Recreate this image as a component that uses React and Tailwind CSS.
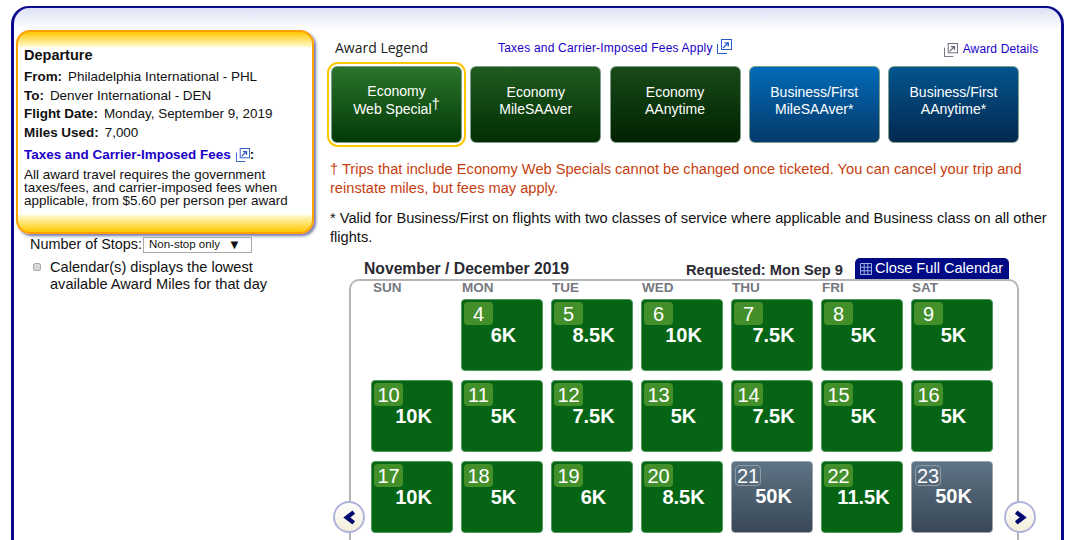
const legend = [
  { top: 'Economy', bottom: 'Web Special', dagger: true, bg: 'bg-gradient-to-b from-[#2b752b] to-[#033a07]', selected: true },
  { top: 'Economy', bottom: 'MileSAAver', bg: 'bg-gradient-to-b from-[#1f5c1f] to-[#032e05]' },
  { top: 'Economy', bottom: 'AAnytime', bg: 'bg-gradient-to-b from-[#194a1a] to-[#022202]' },
  { top: 'Business/First', bottom: 'MileSAAver*', bg: 'bg-gradient-to-b from-[#016bb8] to-[#043a6c]' },
  { top: 'Business/First', bottom: 'AAnytime*', bg: 'bg-gradient-to-b from-[#02558f] to-[#03294f]' },
];

const dayNames = ['SUN', 'MON', 'TUE', 'WED', 'THU', 'FRI', 'SAT'];

const days = [
  null,
  { d: 4, m: '6K' }, { d: 5, m: '8.5K' }, { d: 6, m: '10K' }, { d: 7, m: '7.5K' }, { d: 8, m: '5K' }, { d: 9, m: '5K' },
  { d: 10, m: '10K' }, { d: 11, m: '5K' }, { d: 12, m: '7.5K' }, { d: 13, m: '5K' }, { d: 14, m: '7.5K' }, { d: 15, m: '5K' }, { d: 16, m: '5K' },
  { d: 17, m: '10K' }, { d: 18, m: '5K' }, { d: 19, m: '6K' }, { d: 20, m: '8.5K' }, { d: 21, m: '50K', sold: true }, { d: 22, m: '11.5K' }, { d: 23, m: '50K', sold: true },
];

function PopupIcon({ className }) {
  return (
    <svg viewBox="0 0 15 15" className={className} fill="none" stroke="currentColor" strokeWidth="1">
      <rect x="4.5" y="0.5" width="10" height="10" />
      <path d="M0.5 5v9.5H10" />
      <path d="M6 9l5-5M7.5 3.8h3.8v3.8" strokeWidth="1.3" />
    </svg>
  );
}

function LegendButton({ item }) {
  return (
    <div className={`w-[131px] h-[77px] pb-[8px] rounded-[6px] border border-[#7f9f8a] flex flex-col items-center justify-center text-white text-[14px] leading-[17px] ${item.bg}`}>
      <span>{item.top}</span>
      <span>
        {item.bottom}
        {item.dagger && <span className="text-[15px] relative top-[-5px]">†</span>}
      </span>
    </div>
  );
}

function DayCell({ day }) {
  if (!day) return <div className="h-[72px]" />;
  return (
    <div className={`h-[72px] rounded-[4px] border p-[2px] text-white ${day.sold ? 'bg-gradient-to-b from-[#5e7484] to-[#394859] border-[#9aa5ad]' : 'bg-[#056515] border-[#4f9a5c]'}`}>
      <div className={`rounded-[4px] flex items-center justify-center text-[20px] leading-none ${day.sold ? 'border border-[#8d9ba6] w-[26px] h-[21px] mt-[1px] ml-[1px]' : 'bg-[#43902a] w-[29px] h-[23px]'}`}>
        {day.d}
      </div>
      <div className={`pl-[3px] text-center text-[20px] font-bold leading-[22px] ${day.sold ? 'mt-[-1px]' : 'mt-[-1px]'}`}>{day.m}</div>
    </div>
  );
}

function ArrowButton({ dir, className }) {
  return (
    <div className={`absolute w-[32px] h-[32px] rounded-full border-2 border-[#aeb4dc] bg-gradient-to-b from-white to-[#f3efd8] flex items-center justify-center ${className}`}>
      <svg viewBox="0 0 14 14" className="w-[15px] h-[15px]" fill="none" stroke="#000a6e" strokeWidth="4">
        <path d={dir === 'left' ? 'M11 2L4.5 7l6.5 5' : 'M3 2l6.5 5L3 12'} />
      </svg>
    </div>
  );
}

export default function App() {
  return (
    <div className="w-[1072px] h-[540px] overflow-hidden bg-white pt-[6px] pl-[11px] font-['Liberation_Sans',Arial,sans-serif] text-[#111]">
      {/* Outer panel */}
      <div className="w-[1053px] h-[600px] border-[3px] border-b-0 border-[#0a0a8c] border-t-2 rounded-t-[18px] bg-gradient-to-b from-[#dde1f6] to-white to-[22px] flex pt-[22px] pl-[2px]">
        {/* Left column */}
        <div className="w-[298px] shrink-0">
          <div className="h-[204px] rounded-[14px] border-2 border-[#ffa000] shadow-[2px_2px_3px_#6d75a8] bg-[linear-gradient(to_bottom,#ffc800_0,#fff7c4_14px,#fff_16px,#fff_calc(100%-18px),#fff7c4_calc(100%-16px),#ffc800_100%)] pl-[6px] pt-[14px] text-[13.45px]">
            <div className="font-bold text-[14.5px] leading-[18px]">Departure</div>
            <div className="mt-[4px] leading-[18.5px]">
              <div><b className="mr-[6px]">From:</b>Philadelphia International - PHL</div>
              <div><b className="mr-[6px]">To:</b>Denver International - DEN</div>
              <div><b className="mr-[6px]">Flight Date:</b>Monday, September 9, 2019</div>
              <div><b className="mr-[6px]">Miles Used:</b>7,000</div>
            </div>
            <div className="mt-[4px] font-bold leading-[18px] flex items-center">
              <span className="text-[#1a00c8]">Taxes and Carrier-Imposed Fees</span>
              <PopupIcon className="w-[14px] h-[14px] ml-[5px] text-[#2a5ac8]" />
              <span>:</span>
            </div>
            <div className="mt-[4px] leading-[13px]">
              All award travel requires the government<br />
              taxes/fees, and carrier-imposed fees when<br />
              applicable, from $5.60 per person per award
            </div>
          </div>
          <div className="flex items-center pl-[14px] mt-[2px] text-[14.4px] leading-[17px]">
            <span>Number of Stops:</span>
            <div className="w-[109px] h-[16px] ml-[1px] border border-[#aaa] flex items-center justify-between pl-[5px] pr-[10px] text-[11.5px]">
              <span>Non-stop only</span>
              <span className="text-[13px]">▼</span>
            </div>
          </div>
          <div className="flex pl-[17px] mt-[6px] text-[14.6px] leading-[17px]">
            <div className="w-[8px] h-[8px] mt-[4px] rounded-[2px] bg-[#d8d8d8] border border-[#aaa] shrink-0" />
            <div className="ml-[9px]">Calendar(s) displays the lowest<br />available Award Miles for that day</div>
          </div>
        </div>

        {/* Right column */}
        <div className="ml-[13px] w-[725px] shrink-0">
          <div className="flex items-center h-[32px] pl-[8px] pt-[6px] pb-[2px]">
            <span className="w-[163px] mb-[2px] font-['Open_Sans',sans-serif] text-[14px] text-[#222]">Award Legend</span>
            <span className="text-[12px] text-[#1a00c8] tracking-[0.2px]">Taxes and Carrier-Imposed Fees Apply</span>
            <PopupIcon className="w-[15px] h-[15px] ml-[4px] text-[#2a5ac8] mb-[3px]" />
            <PopupIcon className="w-[14px] h-[14px] ml-[212px] text-[#667] mt-[3px]" />
            <span className="ml-[5px] text-[12px] text-[#1a00c8] tracking-[0.15px] mt-[2px]">Award Details</span>
          </div>
          <div className="flex gap-[8.25px] pl-[4px] h-[87px] items-start pt-[4px]">
            {legend.map((item) => (
              <div key={item.bottom + item.top} className={item.selected ? 'rounded-[7px] outline-2 outline-offset-[2px] outline-[#ffc800]' : ''}>
                <LegendButton item={item} />
              </div>
            ))}
          </div>

          <p className="mt-[11px] pl-[3px] text-[14.63px] leading-[19px] text-[#c63e0e]">
            † Trips that include Economy Web Specials cannot be changed once ticketed. You can cancel your trip and<br />
            reinstate miles, but fees may apply.
          </p>
          <p className="mt-[11px] pl-[3px] text-[14.63px] leading-[19px] text-[#111]">
            * Valid for Business/First on flights with two classes of service where applicable and Business class on all other<br />
            flights.
          </p>

          {/* Calendar */}
          <div className="relative ml-[22px] w-[670px] mt-[10px]">
            <div className="flex items-end h-[22px] pl-[15px]">
              <span className="text-[15.7px] font-bold leading-[20px] text-[#2a2a33]">November / December 2019</span>
              <span className="ml-auto mr-[12px] text-[14.65px] font-bold leading-[18px] text-[#2a2a33]">Requested: Mon Sep 9</span>
              <div className="w-[154px] h-[21px] mr-[10px] rounded-t-[5px] bg-[#000a85] flex items-center pl-[5px] text-[14.6px] text-white">
                <svg viewBox="0 0 12 12" className="w-[12px] h-[12px] mr-[3px]" fill="none" stroke="#9db0e8" strokeWidth="1">
                  <path d="M.5.5h11v11H.5zM4.2.5v11M7.8.5v11M.5 4.2h11M.5 7.8h11" />
                </svg>
                Close Full Calendar
              </div>
            </div>
            <div className="h-[300px] border-2 border-b-0 border-[#b5b5b5] rounded-t-[10px] pl-[20px] pr-[24px]">
              <div className="grid grid-cols-[repeat(7,82px)] gap-x-[8px] h-[18px] text-[13.5px] leading-[13px] font-bold text-[#77787f]">
                {dayNames.map((name, i) => (
                  <span key={name} className={i === 0 ? 'pl-[2px]' : 'pl-[1px]'}>{name}</span>
                ))}
              </div>
              <div className="grid grid-cols-[repeat(7,82px)] gap-x-[8px] gap-y-[9px]">
                {days.map((day, i) => (
                  <DayCell key={i} day={day} />
                ))}
              </div>
            </div>
            <ArrowButton dir="left" className="left-[-16px] top-[244px]" />
            <ArrowButton dir="right" className="left-[655px] top-[244px]" />
          </div>
        </div>
      </div>
    </div>
  );
}
